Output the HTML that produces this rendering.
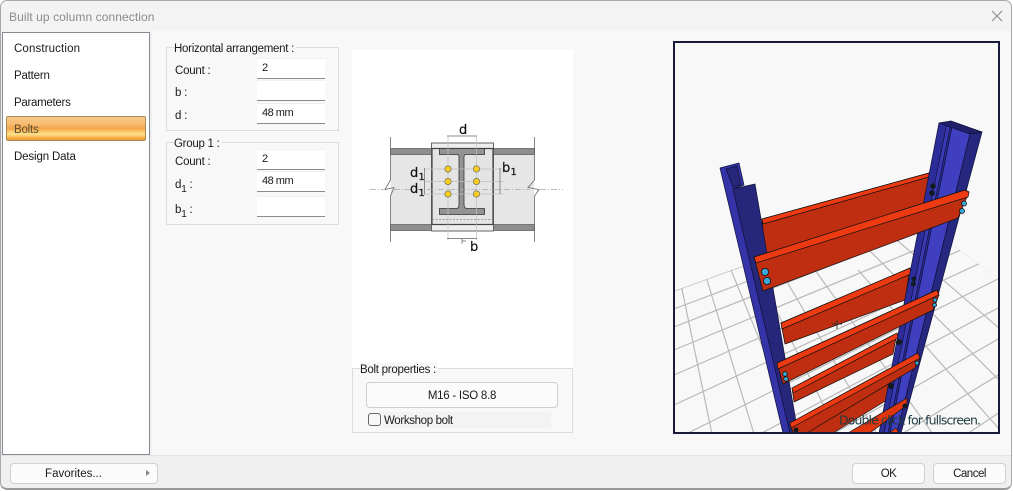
<!DOCTYPE html>
<html><head><meta charset="utf-8"><style>
html,body{margin:0;padding:0;width:1013px;height:491px;overflow:hidden;background:#fff}
body{position:relative;font:11.5px "Liberation Sans",sans-serif;color:#1a1a1a;letter-spacing:-.22px}
div,span{position:absolute;box-sizing:border-box;white-space:nowrap}
.t{line-height:16px;height:14px}
.grp{border:1px solid #dcdcdc}
.leg{background:#f8f8f8;padding:0 2px 0 0;line-height:16px;height:14px;letter-spacing:-.27px}
.in{left:257px;width:68px;background:#fff;border-bottom:1px solid #8c8c8c;border-top:1px solid #f0f0f0;line-height:19px;padding-left:5px;font-size:11px;letter-spacing:-.5px}
.btn{background:#fbfbfb;border:1px solid #d0d0d0;border-radius:4px;text-align:center;line-height:21px}
sub{font-size:10px;vertical-align:-4px;line-height:0}
</style></head><body>
<div id="win" style="left:0;top:0;width:1012px;height:490px;background:#f0f0f0;border:1px solid #a8a8a8;border-bottom:2px solid #9a9a9a;border-radius:7px;overflow:hidden"></div>
<div style="left:1px;top:1px;width:1010px;height:30px;background:#f3f3f3;border-radius:7px 7px 0 0"></div>
<div class="t" style="left:9px;top:9px;color:#8a8a8a;font-size:12px;letter-spacing:.08px">Built up column connection</div>
<svg style="position:absolute;left:991px;top:10px" width="12" height="12"><path d="M1 1L11 11M11 1L1 11" stroke="#8a8a8a" stroke-width="1.1" fill="none"/></svg>

<div style="left:152px;top:31px;width:859px;height:424px;background:#f8f8f8"></div>
<div style="left:1px;top:455px;width:1010px;height:1px;background:#e4e4e4"></div>

<div style="left:2px;top:32px;width:148px;height:423px;background:#fff;border:1px solid #868c94"></div>
<div class="t" style="left:14px;top:41px;letter-spacing:.13px">Construction</div>
<div class="t" style="left:14px;top:68px;letter-spacing:-.2px">Pattern</div>
<div class="t" style="left:14px;top:95px;letter-spacing:-.29px">Parameters</div>
<div style="left:6px;top:116px;width:140px;height:25px;border:1px solid #a88a5a;border-radius:2px;background:linear-gradient(#f5c98c 0,#f7bd72 30%,#f4a548 50%,#fbc868 62%,#ffe08a 75%,#f9b850 88%,#ef9a30 100%)"></div>
<div class="t" style="left:14px;top:122px;color:#5a4a33;letter-spacing:-.2px">Bolts</div>
<div class="t" style="left:14px;top:149px;letter-spacing:-.14px">Design Data</div>

<div class="grp" style="left:166px;top:47px;width:173px;height:84px"></div>
<div class="leg" style="left:174px;top:41px">Horizontal arrangement :</div>
<div class="t" style="left:175px;top:63px">Count :</div>
<div class="t" style="left:175px;top:85px">b :</div>
<div class="t" style="left:175px;top:108px">d :</div>
<div class="in" style="top:58px;height:21px">2</div>
<div class="in" style="top:80px;height:21px"></div>
<div class="in" style="top:103px;height:21px">48 mm</div>

<div class="grp" style="left:166px;top:142px;width:173px;height:83px"></div>
<div class="leg" style="left:174px;top:136px">Group 1 :</div>
<div class="t" style="left:175px;top:154px">Count :</div>
<div class="t" style="left:175px;top:177px">d<sub>1</sub> :</div>
<div class="t" style="left:175px;top:202px">b<sub>1</sub> :</div>
<div class="in" style="top:149px;height:21px">2</div>
<div class="in" style="top:171px;height:21px">48 mm</div>
<div class="in" style="top:196px;height:21px"></div>

<div style="left:352px;top:50px;width:221px;height:318px;background:#fff"></div>
<svg style="position:absolute;left:352px;top:50px;filter:blur(.3px)" width="221" height="318" viewBox="352 50 221 318">
 <rect x="391" y="154" width="40" height="70" fill="#e6e6e6"/><rect x="494" y="154" width="40" height="70" fill="#e6e6e6"/>
 <rect x="390.5" y="148.5" width="41" height="6" fill="#8e8e8e" stroke="#555" stroke-width=".7"/>
 <rect x="493.5" y="148.5" width="41" height="6" fill="#8e8e8e" stroke="#555" stroke-width=".7"/>
 <rect x="390.5" y="224.5" width="41" height="6" fill="#8e8e8e" stroke="#555" stroke-width=".7"/>
 <rect x="493.5" y="224.5" width="41" height="6" fill="#8e8e8e" stroke="#555" stroke-width=".7"/>
 <path d="M390.5 137V180L385 189.500L394 187.500L390.500 196V242M534.500 137V180L528 187.500L539 189.500L534.500 196V242" fill="none" stroke="#666" stroke-width=".8"/>
 <rect x="431.500" y="143" width="62" height="88" fill="#eee" stroke="#666" stroke-width="1"/>
 <rect x="432" y="148.500" width="61" height="76" fill="#e4e4e4" stroke="#444" stroke-width="1.200"/>
 <path d="M439.500 148.500H484.500V154.500H466Q464 154.500 464 157V204Q464 208.500 467 208.500H484.500V214.500H439.500V208.500H456.500Q459 208.500 459 204V157Q459 154.500 457 154.500H439.500Z" fill="#939393" stroke="#333" stroke-width=".8"/>
 <path d="M432 219.500H493" stroke="#888" stroke-width=".7" stroke-dasharray="2 1.500"/>
 <path d="M370 189.500H385M394 189.500H530M540 189.500H563" stroke="#aaa" stroke-width=".8" stroke-dasharray="6 2 1 2"/>
 <path d="M448 136V240M476.500 136V240M425 169H503M425 181.500H503M425 194H503" stroke="#c0c0c0" stroke-width=".7"/>
 <path d="M447 136H477M447 238.500H477M424.500 168V194.500M500 168V194M462 238.500V244M462 241H466" stroke="#666" stroke-width=".7" fill="none"/>
 <g fill="#f6cc1e" stroke="#666" stroke-width=".6"><circle cx="448" cy="169" r="3.200"/><circle cx="476.500" cy="169" r="3.200"/><circle cx="448" cy="181.500" r="3.200"/><circle cx="476.500" cy="181.500" r="3.200"/><circle cx="448" cy="194" r="3.200"/><circle cx="476.500" cy="194" r="3.200"/></g>
 <g font-family="'DejaVu Sans',sans-serif" font-size="13" fill="#111" stroke="#111" stroke-width=".2" letter-spacing="0">
  <text x="459" y="134">d</text><text x="470" y="251">b</text>
  <text x="410" y="177">d</text><text x="418.500" y="180" font-size="10">1</text>
  <text x="410" y="193">d</text><text x="418.500" y="196" font-size="10">1</text>
  <text x="502" y="172">b</text><text x="510.500" y="175" font-size="10">1</text>
 </g>
</svg>

<div class="grp" style="left:352px;top:368px;width:221px;height:65px"></div>
<div class="leg" style="left:360px;top:362px">Bolt properties :</div>
<div class="btn" style="left:366px;top:382px;width:192px;height:26px;line-height:26px;letter-spacing:-.25px">M16 - ISO 8.8</div>
<div style="left:383px;top:412px;width:168px;height:16px;background:#f3f3f3"></div>
<div style="left:368px;top:413px;width:13px;height:13px;border:1px solid #666;border-radius:3px;background:#f8f8f8"></div>
<div class="t" style="left:384px;top:413px;letter-spacing:-.35px">Workshop bolt</div>

<svg style="position:absolute;left:673px;top:41px;letter-spacing:0" width="327" height="393" viewBox="673 41 327 393">
 <defs>
  <clipPath id="g"><path d="M674 291L902 208L999 279V433H674Z"/></clipPath>
 </defs>
 <rect x="673" y="41" width="327" height="393" fill="#f8f8f8"/>
 <g clip-path="url(#g)" stroke="#b9b9b9" stroke-width="1.2">
  <path d="M678 270L712 434M704 270L754 434M731 270L798 434M756 270L838 434M780 270L877 434M815 270L933 434M858 270L1000 430M829 210L1000 381M862 210L1000 329M905 210L1000 279"/>
  <path d="M1000 173L674 291M1000 186L674 309M1000 199L674 327M1000 215L674 350M1000 233L674 375M1000 254L674 405M1000 278L686 434M1000 307L760 434M1000 338L833 434M1000 374L902 434M1000 412L967 434"/>
 </g>
 <!-- back beams -->
 <g stroke="#111" stroke-width=".7" stroke-linejoin="round">
  <path d="M762 219L929 173L925 205L766 262Z" fill="#bf2e10"/>
  <path d="M762 219L929 173V177L763 224Z" fill="#ee3a12"/>
  <path d="M781 323L910 268L905 300L785 344Z" fill="#bf2e10"/>
  <path d="M781 323L910 268L911 274L782 329Z" fill="#ee3a12"/>
  <path d="M792 388L897 333L893 354L794 402Z" fill="#bf2e10"/>
  <path d="M792 388L897 333L898 338L793 393Z" fill="#ee3a12"/>
  <path d="M800 433L890 378L887 400L833 433Z" fill="#bf2e10"/>
 </g>
 <!-- left column -->
 <g stroke="#10103a" stroke-width=".7" stroke-linejoin="round">
  <path d="M720 168L739 163L744 185L733 189L790 433H783Z" fill="#3434a8"/>
  <path d="M726 169L737 166L741 185L733 187Z" fill="#26277a"/>
  <path d="M733 189L755 184L798 433H790Z" fill="#26277a"/>
 </g>
 <!-- right column -->
 <g stroke="#10103a" stroke-width=".7" stroke-linejoin="round">
  <path d="M939 123L953 122L890 433H879Z" fill="#2d2d99"/>
  <path d="M947 123L951 122L888 433H884Z" fill="#3a3ab4"/>
  <path d="M953 122L970 134L897 433H890Z" fill="#3f3fc0"/>
  <path d="M970 134L982 132L901 433H897Z" fill="#26277f"/>
  <path d="M939 123L951 121L982 132L970 134Z" fill="#20206a"/>
 </g>
 <!-- front beams -->
 <g stroke="#111" stroke-width=".7" stroke-linejoin="round">
  <path d="M754 257L965 190L969 192L958 218L763 291Z" fill="#bf2e10"/>
  <path d="M754 257L965 190L969 192L968 197L756 263Z" fill="#ee3a12"/>
  <path d="M777 363L937 290L939 295L933 310L783 384Z" fill="#bf2e10"/>
  <path d="M777 363L937 290L939 295L778 369Z" fill="#ee3a12"/>
  <path d="M790 423L918 353L920 358L915 368L807 433H793Z" fill="#bf2e10"/>
  <path d="M790 423L918 353L920 358L791 428Z" fill="#ee3a12"/>
  <path d="M848 433L907 398V405L870 433Z" fill="#e0360f"/>
  <path d="M889 433L896 428L899 433Z" fill="#ee3a12"/>
 </g>
 <g stroke="#111" stroke-width=".8" fill="#3aa8d8">
  <circle cx="765" cy="272" r="3.600"/><circle cx="767" cy="281" r="3.600"/>
  <circle cx="964" cy="203.500" r="2.500"/><circle cx="962" cy="211" r="2.500"/>
  <circle cx="935" cy="300" r="2"/><circle cx="934.500" cy="305" r="2"/>
  <circle cx="785" cy="374" r="2.300"/><circle cx="786" cy="379" r="2.300"/>
  <circle cx="917" cy="363" r="2"/>
 </g>
 <g fill="#101a20">
  <circle cx="933" cy="186" r="2.800"/><circle cx="932" cy="193" r="2.800"/>
  <circle cx="914" cy="279" r="2.500"/><circle cx="913.500" cy="284" r="2.500"/>
  <circle cx="899" cy="342" r="3"/><circle cx="891" cy="386" r="3"/><circle cx="905" cy="406" r="2.500"/>
  <circle cx="796" cy="430" r="2.500"/>
 </g>
 <path d="M832 324H842M837 320V329" stroke="#333" stroke-width=".9"/>
 <text x="839" y="424.500" font-family="'DejaVu Sans',sans-serif" font-size="12.500" fill="#1f3a40" textLength="142" lengthAdjust="spacing">Double click for fullscreen.</text>
 <rect x="674" y="42" width="325" height="391" fill="none" stroke="#1a1a3c" stroke-width="2"/>
</svg>

<div class="btn" style="left:10px;top:463px;width:148px;height:21px;padding-right:21px;letter-spacing:0">Favorites...</div>
<div style="left:146px;top:470px;width:0;height:0;border-left:4px solid #888;border-top:3.5px solid transparent;border-bottom:3.5px solid transparent"></div>
<div class="btn" style="left:852px;top:463px;width:73px;height:21px;letter-spacing:-.5px">OK</div>
<div class="btn" style="left:933px;top:463px;width:73px;height:21px;letter-spacing:-.5px">Cancel</div>
</body></html>
